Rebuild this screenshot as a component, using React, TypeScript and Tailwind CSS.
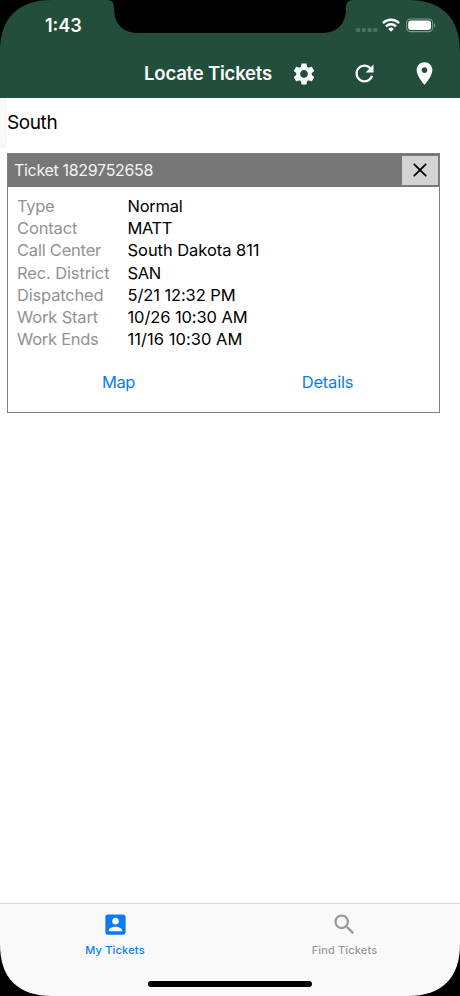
import React from "react";

const details = [
  { label: "Type", value: "Normal", labelTrack: "tracking-[-0.3px]", valueTrack: "tracking-[-0.25px]" },
  { label: "Contact", value: "MATT", labelTrack: "tracking-[-0.15px]", valueTrack: "tracking-[-0.4px]" },
  { label: "Call Center", value: "South Dakota 811", labelTrack: "tracking-[-0.22px]", valueTrack: "tracking-[-0.05px]" },
  { label: "Rec. District", value: "SAN", labelTrack: "tracking-[-0.13px]", valueTrack: "tracking-[-0.3px]" },
  { label: "Dispatched", value: "5/21 12:32 PM", labelTrack: "tracking-[-0.18px]", valueTrack: "tracking-[-0.1px]" },
  { label: "Work Start", value: "10/26 10:30 AM", labelTrack: "tracking-[-0.17px]", valueTrack: "tracking-[-0.1px]" },
  { label: "Work Ends", value: "11/16 10:30 AM", labelTrack: "tracking-[-0.27px]", valueTrack: "tracking-[0.04px]" },
];

function Icon({ d, className }: { d: string; className: string }) {
  return (
    <svg viewBox="0 0 24 24" fill="currentColor" className={className}>
      <path d={d} />
    </svg>
  );
}

const GEAR =
  "M19.14 12.94c.04-.3.06-.61.06-.94 0-.32-.02-.64-.07-.94l2.03-1.58c.18-.14.23-.41.12-.61l-1.92-3.32c-.12-.22-.37-.29-.59-.22l-2.39.96c-.5-.38-1.03-.7-1.62-.94l-.36-2.54c-.04-.24-.24-.41-.48-.41h-3.84c-.24 0-.43.17-.47.41l-.36 2.54c-.59.24-1.13.57-1.62.94l-2.39-.96c-.22-.08-.47 0-.59.22L2.74 8.87c-.12.21-.08.47.12.61l2.03 1.58c-.05.3-.09.63-.09.94s.02.64.07.94l-2.03 1.58c-.18.14-.23.41-.12.61l1.92 3.32c.12.22.37.29.59.22l2.39-.96c.5.38 1.03.7 1.62.94l.36 2.54c.05.24.24.41.48.41h3.84c.24 0 .44-.17.47-.41l.36-2.54c.59-.24 1.13-.56 1.62-.94l2.39.96c.22.08.47 0 .59-.22l1.92-3.32c.12-.22.07-.47-.12-.61l-2.01-1.58zM12 15.6c-1.98 0-3.6-1.62-3.6-3.6s1.62-3.6 3.6-3.6 3.6 1.62 3.6 3.6-1.62 3.6-3.6 3.6z";
const REFRESH =
  "M17.65 6.35C16.2 4.9 14.21 4 12 4c-4.42 0-7.99 3.58-7.99 8s3.57 8 7.99 8c3.73 0 6.84-2.55 7.73-6h-2.08c-.82 2.33-3.04 4-5.65 4-3.31 0-6-2.69-6-6s2.69-6 6-6c1.66 0 3.14.69 4.22 1.78L13 11h7V4l-2.35 2.35z";
const PLACE =
  "M12 2C8.13 2 5 5.13 5 9c0 5.25 7 13 7 13s7-7.75 7-13c0-3.87-3.13-7-7-7zm0 9.5c-1.38 0-2.5-1.12-2.5-2.5s1.12-2.5 2.5-2.5 2.5 1.12 2.5 2.5-1.12 2.5-2.5 2.5z";
const ACCOUNT =
  "M3 5v14c0 1.1.89 2 2 2h14c1.1 0 2-.9 2-2V5c0-1.1-.9-2-2-2H5c-1.11 0-2 .9-2 2zm12 4c0 1.66-1.34 3-3 3s-3-1.34-3-3 1.34-3 3-3 3 1.34 3 3zm-9 8c0-2 4-3.1 6-3.1s6 1.1 6 3.1v1H6v-1z";
const SEARCH =
  "M15.5 14h-.79l-.28-.27C15.41 12.59 16 11.11 16 9.5 16 5.91 13.09 3 9.5 3S3 5.91 3 9.5 5.91 16 9.5 16c1.61 0 3.09-.59 4.23-1.57l.27.28v.79l5 4.99L20.49 19l-4.99-5zm-6 0C7.01 14 5 11.99 5 9.5S7.01 5 9.5 5 14 7.01 14 9.5 11.99 14 9.5 14z";

function StatusBar() {
  return (
    <div className="flex h-[50px] items-start justify-between pl-[45px] pr-[24px]">
      <span className="pt-[14px] text-[18px] leading-[24px] font-semibold tracking-[0px]">1:43</span>
      <div className="flex pt-[17px]">
        <svg width="22" height="16" className="mr-[4px]" fill="#4b7161">
          <rect x="0" y="11" width="4" height="4" rx="1" />
          <rect x="5.8" y="11" width="4" height="4" rx="1" />
          <rect x="11.6" y="11" width="4" height="4" rx="1" />
          <rect x="17.2" y="11" width="4" height="4" rx="1" />
        </svg>
        <svg width="18" height="16" viewBox="0 0 18 16" className="mr-[6px]" fill="none" stroke="white" strokeWidth="2.4">
          <path d="M.9 6.1a11.6 11.6 0 0 1 16.2 0" />
          <path d="M4 9.3a7.2 7.2 0 0 1 10 0" />
          <path d="M9 14.7 6.2 11.9a4 4 0 0 1 5.6 0Z" fill="white" stroke="none" />
        </svg>
        <svg width="30" height="16" viewBox="0 0 30 16" fill="none">
          <rect x=".6" y="2" width="26" height="12.6" rx="3.8" stroke="#7c9a8e" strokeWidth="1.1" />
          <rect x="2.2" y="3.6" width="22.8" height="9.4" rx="2.4" fill="white" />
          <path d="M28 6.2c1.8.8 1.8 3.5 0 4.3Z" fill="#7c9a8e" />
        </svg>
      </div>
    </div>
  );
}

export default function App() {
  return (
    <div className="relative flex h-[996px] w-[460px] flex-col overflow-hidden bg-white font-['Inter','Liberation_Sans',sans-serif] text-black">
      <header className="h-[98px] shrink-0 bg-[#224e3b] text-white">
        <StatusBar />
        <div className="flex h-[48px] items-center justify-end pr-[24px]">
          <h1 className="mr-[19px] text-[18.5px] font-semibold tracking-[-0.2px] whitespace-nowrap">Locate Tickets</h1>
          <Icon d={GEAR} className="mr-[33.5px] mb-[1px] size-[26px]" />
          <Icon d={REFRESH} className="mr-[33px] mb-[2px] size-[27px]" />
          <Icon d={PLACE} className="-mr-[1.5px] mb-[2px] size-[27px]" />
        </div>
      </header>

      <main className="flex-1">
        <div className="flex h-[50px] items-center">
          <div className="h-full w-[7px] bg-[#f8f8f8]" />
          <h2 className="text-[19px] leading-[28px] tracking-[-0.4px]">South</h2>
        </div>
        <section className="mt-[5px] ml-[7px] h-[260px] w-[433px] border border-[#808080]">
          <div className="flex h-[33px] items-center justify-between bg-[#777777] pr-[1px] pl-[6px]">
            <span className="pb-[2px] text-[16px] tracking-[-0.32px] text-[#f4f4f4]">Ticket 1829752658</span>
            <button className="flex h-[29px] w-[36px] items-center justify-center bg-[#d3d3d3]">
              <svg width="14" height="14" viewBox="0 0 14 14" stroke="black" strokeWidth="1.8" strokeLinecap="round" className="-mt-[1px]">
                <path d="M1.3 1.3 12.7 12.7M12.7 1.3 1.3 12.7" />
              </svg>
            </button>
          </div>
          <dl className="pt-[8px] pl-[9px] text-[16.5px] leading-[22.2px]">
            {details.map((row) => (
              <div key={row.label} className="flex">
                <dt className={`w-[110.5px] whitespace-nowrap text-[#929292] ${row.labelTrack}`}>{row.label}</dt>
                <dd className={`whitespace-nowrap ${row.valueTrack}`}>{row.value}</dd>
              </div>
            ))}
          </dl>
          <div className="mt-[21px] flex pl-[11px] text-[16.5px] leading-[22px] tracking-[-0.2px] text-[#0b7cf0]">
            <button className="w-[199px] tracking-[-0.5px]">Map</button>
            <button className="w-[219px]">Details</button>
          </div>
        </section>
      </main>

      <nav className="flex h-[93px] shrink-0 border-t border-[#d8d8d8] bg-[#f9f9f9] text-[11px] font-medium">
        <div className="flex w-[230px] flex-col items-center pt-[7px] text-[#0b7cf5]">
          <Icon d={ACCOUNT} className="size-[27px]" />
          <span className="mt-[4px] leading-[16px] tracking-[0.2px]">My Tickets</span>
        </div>
        <div className="flex w-[229px] flex-col items-center pt-[7px] text-[#999999]">
          <Icon d={SEARCH} className="size-[27px]" />
          <span className="mt-[4px] leading-[16px] tracking-[0.15px]">Find Tickets</span>
        </div>
      </nav>

      <div className="absolute bottom-[9px] left-[148px] h-[6px] w-[164px] rounded-full bg-black" />
      <svg className="pointer-events-none absolute inset-0" width="460" height="996" viewBox="0 0 460 996">
        <path d="M0 0H52C18 0 0 18 0 52ZM460 0H408C442 0 460 18 460 52ZM0 996H52C18 996 0 978 0 944ZM460 996H408C442 996 460 978 460 944Z" />
        <path d="M106 0C112 0 114 2 114 8C114 24 123 33 138 33H322C337 33 346 24 346 8C346 2 348 0 354 0Z" />
      </svg>
    </div>
  );
}
